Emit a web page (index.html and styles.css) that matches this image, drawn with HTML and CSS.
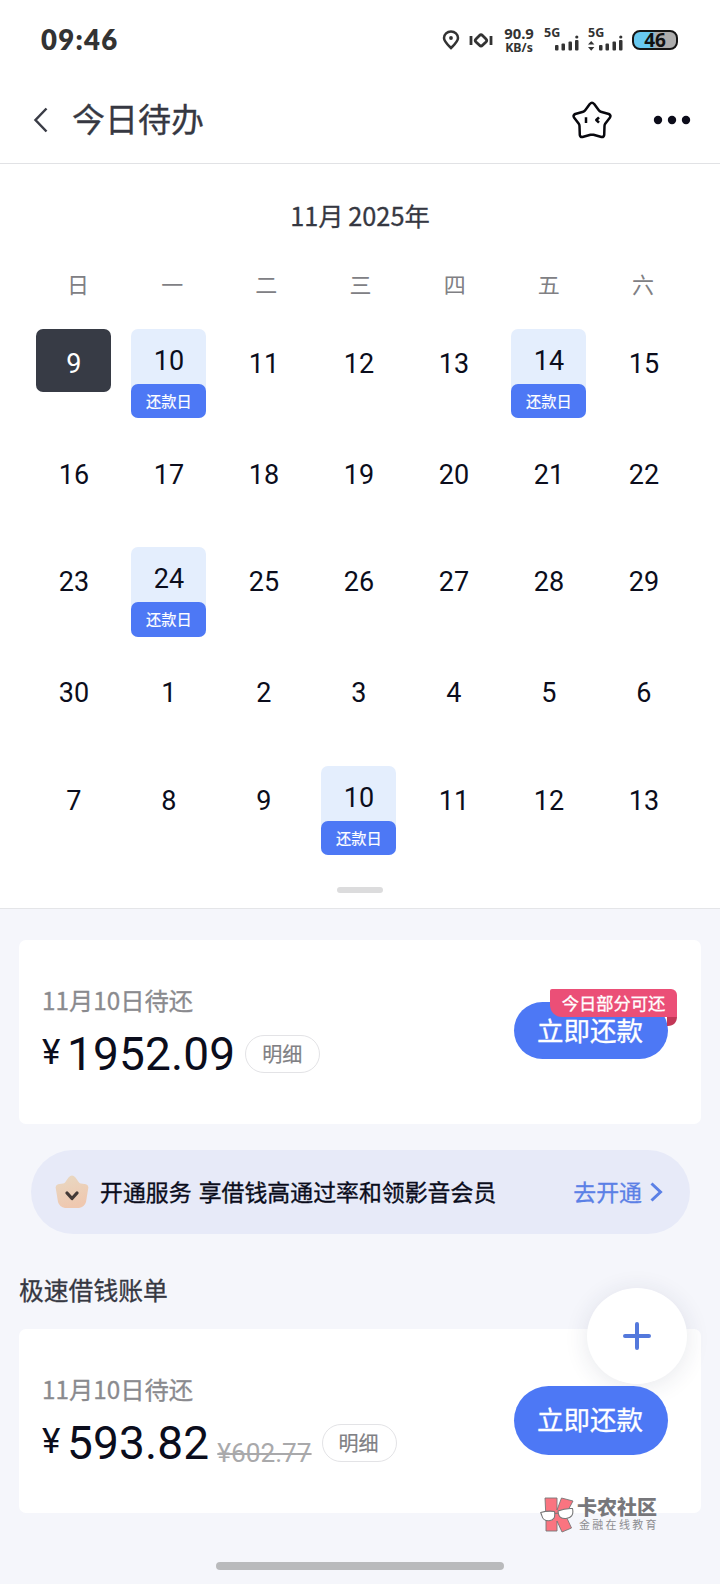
FILE: index.html
```html
<!DOCTYPE html>
<html lang="zh-CN">
<head>
<meta charset="utf-8">
<title>今日待办</title>
<link rel="stylesheet" href="styles.css">
</head>
<body>
<div class="screen">
  <div class="status">
    <span class="clock">09:46</span>
    <div class="status-icons">
      <svg class="pin" width="18" height="20" viewBox="0 0 18 20" fill="none" stroke="#333" stroke-width="2.5"><path d="M9 18C6 15 2 11.500 2 8a7 6.500 0 0 1 14 0c0 3.500-4 7-7 10Z"/><circle cx="9" cy="8" r="1.900" fill="#333" stroke="none"/></svg>
      <svg class="vibrate" width="24" height="16" viewBox="0 0 24 16" fill="none" stroke="#333" stroke-width="2.800"><path d="M2 4v9M22 4v9M10.500 3.500Q12 2 13.500 3.500L17 7Q18.500 8.500 17 10L13.500 13.200Q12 14.700 10.500 13.200L7 10Q5.500 8.500 7 7Z"/></svg>
      <div class="speed"><span>90.9</span><span class="unit">KB/s</span></div>
      <div class="signal"><span>5G</span><svg width="24" height="16" viewBox="0 0 24 16" fill="#333"><rect y="10" width="3.500" height="5.500" rx="1"/><rect x="6.500" y="8.500" width="3.500" height="7" rx="1"/><rect x="13.500" y="6.500" width="3.500" height="9" rx="1"/><rect x="20" y="5" width="3.500" height="10.500" rx="1"/><circle cx="21.800" cy="2" r="1.600"/></svg></div>
      <div class="signal wide"><span>5G</span><svg width="35" height="16" viewBox="0 0 35 16" fill="#333"><path d="M0 9.500 3.200 6 6.400 9.500ZM0 12 3.200 15.800 6.400 12Z"/><rect x="11" y="10" width="3.500" height="5.500" rx="1"/><rect x="17.500" y="8.500" width="3.500" height="7" rx="1"/><rect x="24.500" y="6.500" width="3.500" height="9" rx="1"/><rect x="31" y="5" width="3.500" height="10.500" rx="1"/><circle cx="32.800" cy="2" r="1.600"/></svg></div>
      <div class="battery">46</div>
    </div>
  </div>

  <header class="header">
    <svg class="back" width="16" height="28" viewBox="0 0 16 28" fill="none" stroke="#3a3c46" stroke-width="2.500"><path d="M13.500 2.500 2.500 14l11 11.500"/></svg>
    <h1>今日待办</h1>
    <svg class="star" width="40" height="38" viewBox="0 0 40 38" fill="none" stroke="#08080e" stroke-width="2.500" stroke-linejoin="round"><path d="M17.800 3Q20 .6 22.200 3L26.800 9.300Q27.600 10.400 28.800 10.700L36.800 13Q39.300 14.200 38 16.500L33.200 22.800Q32.500 23.800 32.500 25L32.200 34Q31.800 36.300 29.500 36L21.500 33.800Q20 33.500 18.500 33.800L10.500 36Q8.200 36.300 7.800 34L7.500 25Q7.500 23.800 6.800 22.800L2 16.500Q.7 14.200 3.200 13L11.200 10.700Q12.400 10.400 13.200 9.300Z"/><path d="M14 16.200v5.800M27 16.300 24.300 19 27 21.700"/></svg>
    <svg class="more" width="38" height="10" viewBox="0 0 38 10" fill="#0c0c1a"><circle cx="5" cy="5" r="4.200"/><circle cx="19" cy="5" r="4.200"/><circle cx="33" cy="5" r="4.200"/></svg>
  </header>

  <section class="calendar">
    <div class="month">11月 2025年</div>
    <div class="weekdays"><span>日</span><span>一</span><span>二</span><span>三</span><span>四</span><span>五</span><span>六</span></div>
    <div class="days">
      <div class="day today">9</div><div class="day due">10<span class="tag">还款日</span></div><div class="day">11</div><div class="day">12</div><div class="day">13</div><div class="day due">14<span class="tag">还款日</span></div><div class="day">15</div>
      <div class="day low">16</div><div class="day low">17</div><div class="day low">18</div><div class="day low">19</div><div class="day low">20</div><div class="day low">21</div><div class="day low">22</div>
      <div class="day">23</div><div class="day due">24<span class="tag">还款日</span></div><div class="day">25</div><div class="day">26</div><div class="day">27</div><div class="day">28</div><div class="day">29</div>
      <div class="day low">30</div><div class="day low">1</div><div class="day low">2</div><div class="day low">3</div><div class="day low">4</div><div class="day low">5</div><div class="day low">6</div>
      <div class="day">7</div><div class="day">8</div><div class="day">9</div><div class="day due">10<span class="tag">还款日</span></div><div class="day">11</div><div class="day">12</div><div class="day">13</div>
    </div>
    <div class="handle"></div>
  </section>

  <main class="content">
    <section class="card">
      <div class="bill">
        <div class="label">11月10日待还</div>
        <div class="sum"><span class="yen">¥</span><span class="amount">1952.09</span><span class="detail">明细</span></div>
      </div>
      <div class="pay short">立即还款
        <span class="badge">今日部分可还</span>
        <svg class="fold" width="10" height="9" viewBox="0 0 10 9"><path d="M0 0h10c0 5-3.500 9-9 9H0Z" fill="#c23757"/></svg>
      </div>
    </section>

    <section class="banner">
      <svg width="34" height="34" viewBox="0 0 34 34"><defs><linearGradient id="peach" x1="0" y1="0" x2="0.3" y2="1"><stop offset="0" stop-color="#e8d9c3"/><stop offset="1" stop-color="#efc8b0"/></linearGradient></defs><path d="M13.500 2.500Q17-1.500 20.500 2.500L24 7.500Q24.800 8.500 26 8.600L31 9.300Q34 10.300 33.200 13.500L31 27Q29.500 32 24 33H10Q4.500 32 3 27L.8 13.500Q0 10.300 3 9.300L8 8.600Q9.200 8.500 10 7.500Z" fill="url(#peach)"/><path d="M12 18l5 5.500 5-5.500" fill="none" stroke="#443a37" stroke-width="3.300" stroke-linecap="round" stroke-linejoin="round"/></svg>
      <span class="pitch">开通服务 享借钱高通过率和领影音会员</span>
      <span class="go">去开通</span>
      <svg class="chev" width="13" height="20" viewBox="0 0 13 20" fill="none" stroke="#5b80e6" stroke-width="3"><path d="M1.500 1.500 10.500 10l-9 8.500"/></svg>
    </section>

    <h2>极速借钱账单</h2>

    <section class="card">
      <div class="bill">
        <div class="label">11月10日待还</div>
        <div class="sum"><span class="yen">¥</span><span class="amount">593.82</span><s>¥602.77</s><span class="detail">明细</span></div>
      </div>
      <div class="pay">立即还款</div>
    </section>
  </main>

  <div class="fab"><svg width="30" height="30" viewBox="0 0 30 30" stroke="#5479dc" stroke-width="4" stroke-linecap="round"><path d="M15 3v24M3 15h24"/></svg></div>

  <div class="watermark">
    <svg width="34" height="36" viewBox="0 0 34 36" stroke="#777" stroke-width="1.100" stroke-linejoin="round"><path d="M5 1H17V13L21.500 1 33 4 25.500 18 31.500 31 22 35 17 24V34H6V22Z" fill="#fa7480" stroke-width=".9"/><path d="M.7 15.500Q8 13.500 14.500 14.500 16 23.500 9 23.800 3 24 1.800 18.500ZM18 14Q25 11 32.500 11.500 34.500 20.500 26 21.500 19.500 22 18.500 17ZM15 16.500l3-.5" fill="#fff"/></svg>
    <div class="mark-text"><span class="mark-name">卡农社区</span><span class="mark-sub">金融在线教育</span></div>
  </div>
  <div class="home"></div>
</div>
</body>
</html>
```
FILE: styles.css
```css
* { box-sizing: border-box; }
body { margin: 0; background: #f5f6fb; font-family: "Noto Sans CJK SC", sans-serif; color: #0b0d1c; }
svg { display: block; flex: none; }
.screen { position: relative; width: 720px; height: 1584px; overflow: hidden; display: flex; flex-direction: column; }

.status { height: 80px; background: #fff; display: flex; justify-content: space-between; align-items: center; padding: 0 42px 0 41px; color: #333; }
.clock { font: 800 27.5px/32px Lato, sans-serif; letter-spacing: 1.3px; }
.status-icons { display: flex; align-items: center; }
.vibrate { margin-left: 9px; }
.speed { display: flex; flex-direction: column; align-items: center; width: 34px; margin-left: 9px; font: 700 14.8px/14px "Noto Sans", sans-serif; }
.speed .unit { font-size: 12.3px; line-height: 15px; }
.signal { width: 35px; height: 27px; margin-left: 8px; display: flex; flex-direction: column; font: 700 12.5px/11px "Noto Sans", sans-serif; }
.signal.wide { margin-left: 9px; }
.signal svg { align-self: flex-end; margin-top: -3px; }
.battery { width: 46px; height: 20px; margin-left: 9px; border: 2px solid #151515; border-radius: 8px; background: linear-gradient(90deg, #68c9f0 0 40%, #adadad 54%); color: #111; font: 700 19px/16px "Noto Sans", sans-serif; text-align: center; }

.header { height: 84px; background: #fff; border-bottom: 1px solid #e1e2e5; display: flex; align-items: center; padding: 0 29px 4px 33px; }
h1 { margin: -3px auto 0 23px; font-size: 33px; line-height: 44px; font-weight: 400; color: #363842; -webkit-text-stroke: .3px; }
.star { margin-right: 41px; }

.calendar { height: 745px; background: #fff; border-bottom: 1px solid #e4e5e8; padding: 31px 19px 0 36px; display: flex; flex-direction: column; }
.month { height: 40px; line-height: 40px; font-size: 25.3px; color: #363842; text-align: center; padding-right: 17px; word-spacing: -1px; -webkit-text-stroke: .3px; }
.weekdays { display: grid; grid-template-columns: repeat(7, 94.15px); margin: 31px 0 0 -5px; height: 34px; line-height: 34px; font-size: 22px; color: #808084; text-align: center; }
.days { margin: 28.6px 0 0 .4px; display: grid; grid-template-columns: repeat(7, 75px); column-gap: 20px; grid-auto-rows: 109.25px; align-items: start; }
.day { height: 63px; padding-top: 2px; line-height: 66px; font-family: Roboto, sans-serif; font-size: 27px; text-align: center; border-radius: 7px; }
.low { padding-top: 4px; }
.today { background: #373b45; color: #fff; }
.due { height: 89.5px; padding-top: 0; background: #e4eefd; display: flex; flex-direction: column; justify-content: space-between; line-height: 65px; }
.due .tag { margin-top: -10px; height: 34.5px; border-radius: 7px; background: #4d78f5; color: #fff; font: 400 15.200px/32px "Noto Sans CJK SC", sans-serif; -webkit-text-stroke: .2px; }
.handle { width: 46px; height: 6px; margin: 12px 0 0 301px; border-radius: 3px; background: #dcdcdd; }

.content { padding: 31px 19px 0; }
.card { height: 184px; border-radius: 7px; background: #fff; padding: 0 33px 0 23px; display: flex; justify-content: space-between; }
.bill { padding-top: 43px; }
.label { height: 34px; line-height: 34px; font-size: 24.300px; color: #8a8a8e; -webkit-text-stroke: .3px; }
.sum { display: flex; align-items: center; height: 76px; margin-top: -1px; font-family: Roboto, sans-serif; }
.yen { font-size: 35px; line-height: 40px; margin-top: -3px; width: 25px; }
.amount { font-size: 46px; line-height: 76px; letter-spacing: .15px; }
s { font-size: 26.200px; line-height: 30px; margin: 20px 0 0 8px; color: #a9a9ab; text-decoration-thickness: 2px; }
.detail { width: 75px; height: 38px; margin-left: 10px; border: 1.5px solid #e3e3e6; border-radius: 19px; color: #808084; font: 400 20px/35px "Noto Sans CJK SC", sans-serif; text-align: center; text-indent: -1px; -webkit-text-stroke: .2px; }
.pay { position: relative; z-index: 1; width: 154px; height: 69px; margin-top: 57px; border-radius: 35px; background: #4d78f5; color: #fff; font-size: 26.5px; line-height: 66px; text-align: center; text-indent: -2px; -webkit-text-stroke: .3px; }
.pay.short { height: 57px; margin-top: 62px; line-height: 56px; }
.badge { position: absolute; left: 36px; top: -13px; width: 127px; height: 28px; border-radius: 2px 6px 0 12px; background: #eb4f77; font-size: 17.3px; line-height: 27px; text-indent: 0; }
.fold { position: absolute; left: 153px; top: 15px; }
.banner { height: 84px; margin: 26px 11px 0 12px; border-radius: 42px; background: #e7eaf8; display: flex; align-items: center; padding: 0 27px 0 24px; font-size: 22.9px; line-height: 40px; }
.pitch { margin: -3px auto 0 11px; word-spacing: 2px; -webkit-text-stroke: .35px; }
.go { color: #5b80e6; margin-top: -3px; -webkit-text-stroke: .3px; }
.chev { margin-left: 8px; }
h2 { margin: 39px 0 22px 0; height: 34px; font-size: 24.8px; line-height: 33px; font-weight: 400; color: #363842; -webkit-text-stroke: .3px; }

.fab { position: absolute; left: 587px; top: 1288px; width: 100px; height: 96px; border-radius: 50%; background: #fff; box-shadow: 0 3px 24px rgba(40, 50, 80, .11); display: grid; place-items: center; }
.watermark { position: absolute; left: 540px; top: 1497px; display: flex; gap: 3px; z-index: 1; }
.mark-text { display: flex; flex-direction: column; }
.mark-name { font-size: 20px; line-height: 19px; font-weight: 900; color: #77777b; }
.mark-sub { margin: 1px 0 0 2px; font-size: 11px; line-height: 14px; letter-spacing: 2.3px; color: #8d8d91; white-space: nowrap; }
.home { position: absolute; left: 216px; top: 1562px; width: 288px; height: 8px; border-radius: 4px; background: #b9babc; }
```
